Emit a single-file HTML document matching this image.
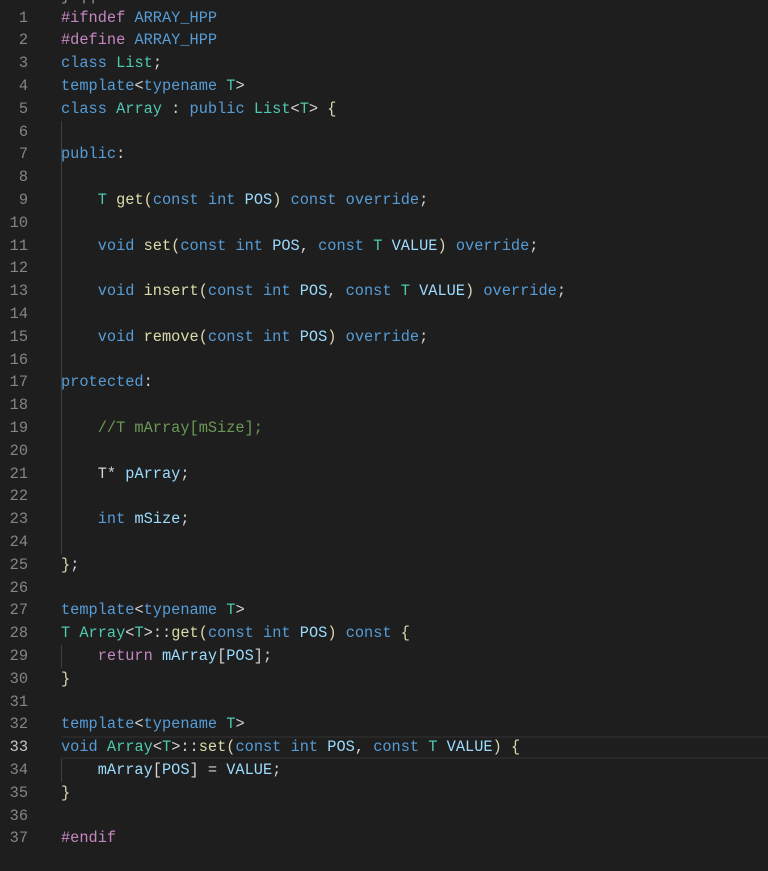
<!DOCTYPE html>
<html><head><meta charset="utf-8"><style>
html,body{margin:0;padding:0;background:#1e1e1e;width:768px;height:871px;overflow:hidden}
.ed{position:relative;top:1px;font-family:"Liberation Mono",monospace;font-size:15.3px;}
.l{position:absolute;left:0;width:768px;height:22.8px;line-height:22.8px;white-space:pre;color:#d4d4d4}
.n{position:absolute;left:0;width:28px;text-align:right;color:#858585}
.c{position:absolute;left:61px}
.cur .n{color:#c6c6c6}
.cur .bg{position:absolute;left:61px;right:0;top:0;bottom:0;border-top:2px solid #282828;border-bottom:2px solid #282828;box-sizing:border-box}
.g{position:absolute;left:61px;width:1px;background:#404040}
.k{color:#569cd6}.t{color:#4ec9b0}.f{color:#dcdcaa}.v{color:#9cdcfe}.p{color:#c586c0}.m{color:#6a9955}.y{color:#dcd6b0}.b{color:#dcd6b0}
</style></head><body><div class="ed">
<div class="l" style="top:-16px"><span class="c" style="color:#999">} ¦¦</span></div>
<div class="l" style="top:5.6px"><span class="n">1</span><span class="c"><span class="p">#ifndef</span> <span class="k">ARRAY_HPP</span></span></div>
<div class="l" style="top:28.4px"><span class="n">2</span><span class="c"><span class="p">#define</span> <span class="k">ARRAY_HPP</span></span></div>
<div class="l" style="top:51.2px"><span class="n">3</span><span class="c"><span class="k">class</span> <span class="t">List</span>;</span></div>
<div class="l" style="top:74px"><span class="n">4</span><span class="c"><span class="k">template</span>&lt;<span class="k">typename</span> <span class="t">T</span>&gt;</span></div>
<div class="l" style="top:96.8px"><span class="n">5</span><span class="c"><span class="k">class</span> <span class="t">Array</span> : <span class="k">public</span> <span class="t">List</span>&lt;<span class="t">T</span>&gt; <span class="y">{</span></span></div>
<div class="l" style="top:119.6px"><span class="n">6</span></div>
<div class="l" style="top:142.4px"><span class="n">7</span><span class="c"><span class="k">public</span>:</span></div>
<div class="l" style="top:165.2px"><span class="n">8</span></div>
<div class="l" style="top:188px"><span class="n">9</span><span class="c">    <span class="t">T</span> <span class="f">get</span><span class="b">(</span><span class="k">const</span> <span class="k">int</span> <span class="v">POS</span><span class="b">)</span> <span class="k">const</span> <span class="k">override</span>;</span></div>
<div class="l" style="top:210.8px"><span class="n">10</span></div>
<div class="l" style="top:233.6px"><span class="n">11</span><span class="c">    <span class="k">void</span> <span class="f">set</span><span class="b">(</span><span class="k">const</span> <span class="k">int</span> <span class="v">POS</span>, <span class="k">const</span> <span class="t">T</span> <span class="v">VALUE</span><span class="b">)</span> <span class="k">override</span>;</span></div>
<div class="l" style="top:256.4px"><span class="n">12</span></div>
<div class="l" style="top:279.2px"><span class="n">13</span><span class="c">    <span class="k">void</span> <span class="f">insert</span><span class="b">(</span><span class="k">const</span> <span class="k">int</span> <span class="v">POS</span>, <span class="k">const</span> <span class="t">T</span> <span class="v">VALUE</span><span class="b">)</span> <span class="k">override</span>;</span></div>
<div class="l" style="top:302px"><span class="n">14</span></div>
<div class="l" style="top:324.8px"><span class="n">15</span><span class="c">    <span class="k">void</span> <span class="f">remove</span><span class="b">(</span><span class="k">const</span> <span class="k">int</span> <span class="v">POS</span><span class="b">)</span> <span class="k">override</span>;</span></div>
<div class="l" style="top:347.6px"><span class="n">16</span></div>
<div class="l" style="top:370.4px"><span class="n">17</span><span class="c"><span class="k">protected</span>:</span></div>
<div class="l" style="top:393.2px"><span class="n">18</span></div>
<div class="l" style="top:416px"><span class="n">19</span><span class="c">    <span class="m">//T mArray[mSize];</span></span></div>
<div class="l" style="top:438.8px"><span class="n">20</span></div>
<div class="l" style="top:461.6px"><span class="n">21</span><span class="c">    T* <span class="v">pArray</span>;</span></div>
<div class="l" style="top:484.4px"><span class="n">22</span></div>
<div class="l" style="top:507.2px"><span class="n">23</span><span class="c">    <span class="k">int</span> <span class="v">mSize</span>;</span></div>
<div class="l" style="top:530px"><span class="n">24</span></div>
<div class="l" style="top:552.8px"><span class="n">25</span><span class="c"><span class="y">}</span>;</span></div>
<div class="l" style="top:575.6px"><span class="n">26</span></div>
<div class="l" style="top:598.4px"><span class="n">27</span><span class="c"><span class="k">template</span>&lt;<span class="k">typename</span> <span class="t">T</span>&gt;</span></div>
<div class="l" style="top:621.2px"><span class="n">28</span><span class="c"><span class="t">T</span> <span class="t">Array</span>&lt;<span class="t">T</span>&gt;::<span class="f">get</span><span class="y">(</span><span class="k">const</span> <span class="k">int</span> <span class="v">POS</span><span class="y">)</span> <span class="k">const</span> <span class="y">{</span></span></div>
<div class="l" style="top:644px"><span class="n">29</span><span class="c">    <span class="p">return</span> <span class="v">mArray</span>[<span class="v">POS</span>];</span></div>
<div class="l" style="top:666.8px"><span class="n">30</span><span class="c"><span class="y">}</span></span></div>
<div class="l" style="top:689.6px"><span class="n">31</span></div>
<div class="l" style="top:712.4px"><span class="n">32</span><span class="c"><span class="k">template</span>&lt;<span class="k">typename</span> <span class="t">T</span>&gt;</span></div>
<div class="l cur" style="top:735.2px"><span class="bg"></span><span class="n">33</span><span class="c"><span class="k">void</span> <span class="t">Array</span>&lt;<span class="t">T</span>&gt;::<span class="f">set</span><span class="y">(</span><span class="k">const</span> <span class="k">int</span> <span class="v">POS</span>, <span class="k">const</span> <span class="t">T</span> <span class="v">VALUE</span><span class="y">)</span> <span class="y">{</span></span></div>
<div class="l" style="top:758px"><span class="n">34</span><span class="c">    <span class="v">mArray</span>[<span class="v">POS</span>] = <span class="v">VALUE</span>;</span></div>
<div class="l" style="top:780.8px"><span class="n">35</span><span class="c"><span class="y">}</span></span></div>
<div class="l" style="top:803.6px"><span class="n">36</span></div>
<div class="l" style="top:826.4px"><span class="n">37</span><span class="c"><span class="p">#endif</span></span></div>
<div class="g" style="top:119.6px;height:433.2px"></div>
<div class="g" style="top:644px;height:22.8px"></div>
<div class="g" style="top:758px;height:22.8px"></div>
</div></body></html>
